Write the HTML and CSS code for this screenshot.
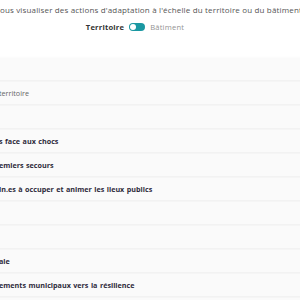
FILE: index.html
```html
<!DOCTYPE html>
<html lang="fr">
<head>
    <meta charset="UTF-8">
    <meta name="viewport" content="width=device-width, initial-scale=1.0">
    <title>Actions d'adaptation</title>
    <link rel="stylesheet" href="styles.css">
</head>
<body>
    <div class="page">
        <p class="intro">Ici, pour vous visualiser des actions d'adaptation à l'échelle du territoire ou du bâtiment</p>

        <div class="switch-row">
            <span class="switch-label active">Territoire</span>
            <span class="switch"><span class="knob"></span></span>
            <span class="switch-label">Bâtiment</span>
        </div>

        <ul class="actions">
            <li class="action"></li>
            <li class="action"><span class="muted">territoire</span></li>
            <li class="action"></li>
            <li class="action"><span>s face aux chocs</span></li>
            <li class="action"><span>emiers secours</span></li>
            <li class="action"><span>in.es à occuper et animer les lieux publics</span></li>
            <li class="action"></li>
            <li class="action"></li>
            <li class="action"><span>ale</span></li>
            <li class="action"><span>ements municipaux vers la résilience</span></li>
            <li class="action"></li>
        </ul>
    </div>
</body>
</html>
```

FILE: styles.css
```css
body {
    margin: 0;
    background: #fff;
    font-family: "Open Sans", "Liberation Sans", sans-serif;
    overflow: hidden;
}

.page {
    width: 400px;
    margin-left: -65px;
}

.intro {
    margin: 4px 0 0;
    padding-right: 6px;
    font-size: 8px;
    letter-spacing: 0.16px;
    color: #555;
    text-align: center;
    white-space: nowrap;
}

.switch-row {
    display: flex;
    justify-content: center;
    align-items: center;
    gap: 5px;
    margin-top: 7px;
}

.switch-label {
    font-size: 7.6px;
    letter-spacing: 0.2px;
    color: #939393;
}

.switch-label.active {
    color: #333;
    font-weight: 700;
}

.switch {
    display: flex;
    align-items: center;
    width: 16px;
    height: 8px;
    border-radius: 4px;
    background: #1a98a2;
}

.knob {
    width: 6px;
    height: 6px;
    margin-left: 1px;
    border-radius: 50%;
    background: #fff;
}

.actions {
    list-style: none;
    margin: 26px 0 0;
    padding: 0;
}

.action {
    display: flex;
    align-items: center;
    height: 22px;
    margin-bottom: 2px;
    padding-left: 64px;
    background: #fafafa;
    box-shadow: 0 1px 3px rgba(0, 0, 0, 0.08);
    font-size: 7.2px;
    font-weight: 700;
    word-spacing: 0.6px;
    color: #2e2a3a;
    white-space: nowrap;
}

.action .muted {
    font-weight: 400;
    color: #666;
}
```
